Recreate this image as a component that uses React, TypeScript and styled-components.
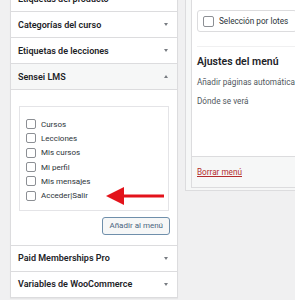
import React from "react";
import styled, { createGlobalStyle } from "styled-components";

const Global = createGlobalStyle`
  html, body { margin: 0; padding: 0; }
  body {
    width: 295px; height: 300px; overflow: hidden;
    background: #f0f0f1;
    font-family: Roboto, "Liberation Sans", Arial, sans-serif;
    color: #1d2327;
  }
`;

const Page = styled.div`
  display: flex;
  align-items: flex-start;
  gap: 7px;
  margin-top: -15px;
  padding-left: 10px;
`;

const LeftPanel = styled.div`
  width: 166px;
  flex: none;
  background: #fff;
  border: 1px solid #dcdcde;
  box-shadow: 0 1px 1px rgba(0,0,0,0.04);
  display: flex;
  flex-direction: column;
`;

const SectionTitle = styled.div<{ $open?: boolean }>`
  height: 25px;
  border-bottom: 1px solid #dcdcde;
  background: ${p => (p.$open ? "#f6f7f7" : "#fff")};
  display: flex;
  align-items: center;
  justify-content: space-between;
  padding: 0 9px 0 7px;
  font-size: 9px;
  font-weight: 600;
  color: #1d2327;
  &:last-child { border-bottom: none; }
`;

const Caret = styled.span<{ $up?: boolean }>`
  width: 0; height: 0;
  border-left: 2.5px solid transparent;
  border-right: 2.5px solid transparent;
  ${p => (p.$up ? "border-bottom: 3px solid #787c82;" : "border-top: 3px solid #787c82;")}
`;

const SectionBody = styled.div`
  border-bottom: 1px solid #dcdcde;
  padding: 16px 8px 10px 8px;
  display: flex;
  flex-direction: column;
  align-items: stretch;
  gap: 6px;
`;

const ListBox = styled.div`
  border: 1px solid #e4e4e7;
  padding: 10px 6px 7px 6px;
  display: flex;
  flex-direction: column;
`;

const Item = styled.label`
  height: 14.3px;
  display: flex;
  align-items: center;
  gap: 5px;
  font-size: 8px;
  color: #2c3338;
`;

const Box = styled.span`
  width: 8px; height: 8px;
  border: 1px solid #8c8f94;
  border-radius: 2px;
  background: #fff;
  flex: none;
`;

const ArrowWrap = styled.span`
  position: relative;
  width: 0; height: 0;
`;

const ArrowSvg = styled.svg`
  position: absolute;
  left: 13px;
  top: -10px;
`;

const AddButton = styled.button`
  align-self: flex-end;
  height: 18px;
  padding: 0 6px;
  margin-right: -1px;
  border: 1px solid #6f8fab;
  border-radius: 3px;
  background: #f6f7f7;
  color: #4a6580;
  font-family: inherit;
  font-size: 8px;
  line-height: 16px;
`;

const RightPanel = styled.div`
  flex: 1;
  border-left: 1px solid #dcdcde;
  border-bottom: 1px solid #dcdcde;
  background: #f6f7f7;
  padding: 0 0 2px 5px;
`;

const Inner = styled.div`
  background: #fff;
  border-left: 1px solid #dcdcde;
  border-bottom: 1px solid #dcdcde;
  display: flex;
  flex-direction: column;
`;

const Body = styled.div`
  padding: 25px 0 0 5px;
  height: 146px;
`;

const BulkButton = styled.div`
  display: flex;
  align-items: center;
  gap: 5px;
  height: 20px;
  padding: 0 8px 0 5px;
  border: 1px solid #dcdcde;
  border-radius: 3px;
  width: max-content;
  font-size: 8.2px;
  color: #2c3338;
  white-space: nowrap;
`;

const BulkBox = styled.span`
  width: 9px; height: 9px;
  border: 1px solid #8c8f94;
  border-radius: 2px;
  background: #fff;
`;

const Settings = styled.div`
  margin-top: 14px;
  border-top: 1px solid #f0f0f1;
  padding-top: 8px;
`;

const Heading = styled.h3`
  margin: 0 0 8px 0;
  font-size: 10.5px;
  font-weight: 600;
  color: #1d2327;
  line-height: 14px;
`;

const Muted = styled.div`
  font-size: 8.2px;
  color: #50575e;
  white-space: nowrap;
  line-height: 10px;
  margin-bottom: 9px;
`;

const Footer = styled.div`
  height: 30px;
  border-top: 1px solid #dcdcde;
  background: #f6f7f7;
  display: flex;
  align-items: center;
  padding-left: 5px;
`;

const DeleteLink = styled.a`
  font-size: 8.2px;
  color: #b32d2e;
  text-decoration: underline;
`;

const items = ["Cursos", "Lecciones", "Mis cursos", "Mi perfil", "Mis mensajes", "Acceder|Salir"];

export default function App() {
  return (
    <>
      <Global />
      <Page>
        <LeftPanel>
          <SectionTitle>Etiquetas del producto<Caret /></SectionTitle>
          <SectionTitle>Categorías del curso<Caret /></SectionTitle>
          <SectionTitle>Etiquetas de lecciones<Caret /></SectionTitle>
          <SectionTitle $open>Sensei LMS<Caret $up /></SectionTitle>
          <SectionBody>
            <ListBox>
              {items.map(t => (
                <Item key={t}>
                  <Box />
                  {t}
                  {t === "Acceder|Salir" && (
                    <ArrowWrap>
                      <ArrowSvg width="58" height="20" viewBox="0 0 58 20">
                        <polygon points="0,10 18,1 18,19" fill="#e3131b" />
                        <rect x="16" y="8.5" width="42" height="3" fill="#e3131b" />
                      </ArrowSvg>
                    </ArrowWrap>
                  )}
                </Item>
              ))}
            </ListBox>
            <AddButton>Añadir al menú</AddButton>
          </SectionBody>
          <SectionTitle>Paid Memberships Pro<Caret /></SectionTitle>
          <SectionTitle>Variables de WooCommerce<Caret /></SectionTitle>
        </LeftPanel>
        <RightPanel>
          <Inner>
            <Body>
              <BulkButton><BulkBox />Selección por lotes</BulkButton>
              <Settings>
                <Heading>Ajustes del menú</Heading>
                <Muted>Añadir páginas automáticamente</Muted>
                <Muted>Dónde se verá</Muted>
              </Settings>
            </Body>
            <Footer><DeleteLink>Borrar menú</DeleteLink></Footer>
          </Inner>
        </RightPanel>
      </Page>
    </>
  );
}
